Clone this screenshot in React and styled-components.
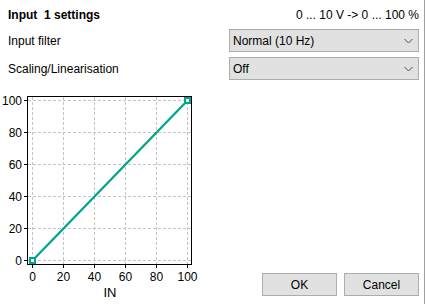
import React from "react";
import styled, { createGlobalStyle } from "styled-components";

const GlobalStyle = createGlobalStyle`
  html, body {
    margin: 0;
    padding: 0;
    background: #ffffff;
  }
  body {
    font-family: "Liberation Sans", Arial, sans-serif;
    font-size: 12px;
    color: #000000;
  }
`;

const Page = styled.div`
  width: 424px;
  height: 304px;
  border-right: 1px solid #a0a0a0;
  display: flex;
  flex-direction: column;
  overflow: hidden;
`;

const Header = styled.div`
  display: flex;
  justify-content: space-between;
  align-items: center;
  height: 14px;
  padding: 8px 5px 0 8px;
`;

const Title = styled.div`
  font-weight: bold;
  white-space: pre;
`;

const Range = styled.div`
  white-space: pre;
`;

const Rows = styled.div`
  display: flex;
  flex-direction: column;
  gap: 5px;
  padding: 7px 5px 0 8px;
`;

const Row = styled.div`
  display: flex;
  justify-content: space-between;
  align-items: center;
  height: 23px;
`;

const Label = styled.div``;

const Select = styled.div`
  box-sizing: border-box;
  width: 190px;
  height: 23px;
  background: #e1e1e1;
  border: 1px solid #adadad;
  display: flex;
  align-items: center;
  justify-content: space-between;
  padding: 0 5px 0 3px;
`;

const Bottom = styled.div`
  display: flex;
  justify-content: space-between;
  align-items: flex-end;
  margin-top: 10px;
  padding-right: 5px;
`;

const Buttons = styled.div`
  display: flex;
  gap: 7px;
  margin-bottom: 6px;
`;

const Button = styled.div`
  box-sizing: border-box;
  width: 75px;
  height: 23px;
  background: #e1e1e1;
  border: 1px solid #adadad;
  display: flex;
  align-items: center;
  justify-content: center;
`;

const Chevron = () => (
  <svg width="9" height="6" viewBox="0 0 9 6">
    <path d="M0.5 1 L4.5 5 L8.5 1" fill="none" stroke="#505050" strokeWidth="1" />
  </svg>
);

const TEAL = "#00a38b";
const ticks = [0, 20, 40, 60, 80, 100];
const px = (v) => 32 + v * 1.55;
const py = (v) => 170 - v * 1.6;

const Chart = () => (
  <svg width="200" height="212" viewBox="0 0 200 212" fontFamily="Liberation Sans, Arial, sans-serif" fontSize="12">
    {ticks.map((t) => (
      <g key={t}>
        <line x1={px(t) + 0.5} y1="7" x2={px(t) + 0.5} y2="174" stroke="#c4c4c4" strokeDasharray="3 2" />
        <line x1="28" y1={py(t) + 0.5} x2="191" y2={py(t) + 0.5} stroke="#c4c4c4" strokeDasharray="3 2" />
        <line x1="24" y1={py(t) + 0.5} x2="28" y2={py(t) + 0.5} stroke="#000" />
        <line x1={px(t) + 0.5} y1="174" x2={px(t) + 0.5} y2="178" stroke="#000" />
        <text x="22" y={py(t) + 4.5} textAnchor="end">{t}</text>
        <text x={px(t) + 0.5} y="191" textAnchor="middle">{t}</text>
      </g>
    ))}
    <rect x="27.5" y="6.5" width="164" height="168" fill="none" stroke="#000" />
    <line x1={px(0) + 0.5} y1={py(0) + 0.5} x2={px(100) + 0.5} y2={py(100) + 0.5} stroke={TEAL} strokeWidth="2.2" />
    <rect x={px(0) - 2} y={py(0) - 2} width="5" height="5" fill="#fff" stroke={TEAL} strokeWidth="2" />
    <rect x={px(100) - 2} y={py(100) - 2} width="5" height="5" fill="#fff" stroke={TEAL} strokeWidth="2" />
    <text x="110" y="207" textAnchor="middle" fontSize="13">IN</text>
  </svg>
);

export default function App() {
  return (
    <Page>
      <GlobalStyle />
      <Header>
        <Title>Input  1 settings</Title>
        <Range>0 ... 10 V -&gt; 0 ... 100 %</Range>
      </Header>
      <Rows>
        <Row>
          <Label>Input filter</Label>
          <Select>
            <span>Normal (10 Hz)</span>
            <Chevron />
          </Select>
        </Row>
        <Row>
          <Label>Scaling/Linearisation</Label>
          <Select>
            <span>Off</span>
            <Chevron />
          </Select>
        </Row>
      </Rows>
      <Bottom>
        <Chart />
        <Buttons>
          <Button>OK</Button>
          <Button>Cancel</Button>
        </Buttons>
      </Bottom>
    </Page>
  );
}
